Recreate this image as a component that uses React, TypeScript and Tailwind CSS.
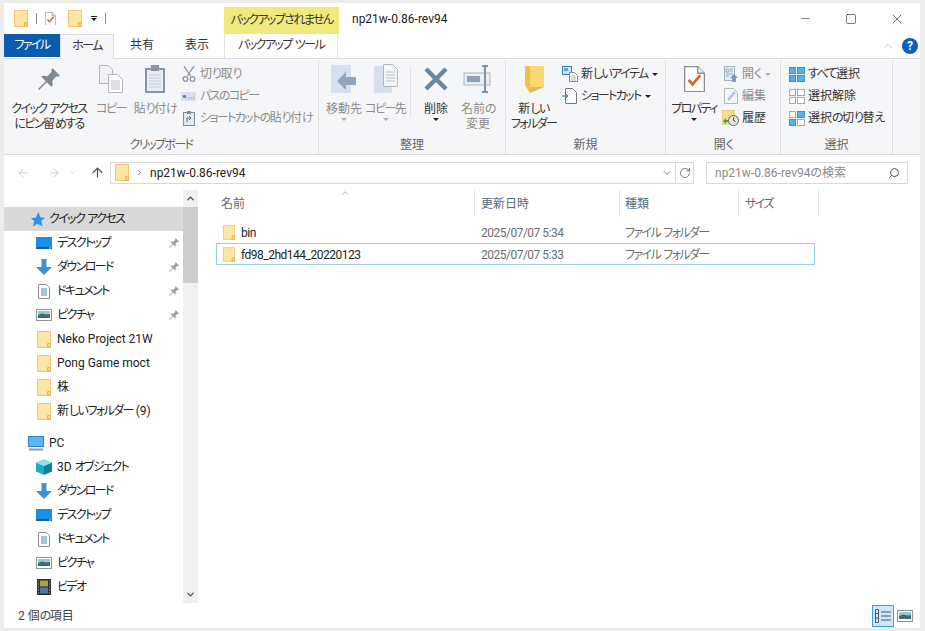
import { ReactNode } from "react"
import { ArrowLeft, ArrowRight, ArrowUp, ChevronDown, ChevronRight, ChevronUp, RotateCw, Search, X, Minus, Square } from "lucide-react"

// kana in the original UI font is much narrower than Noto's, so tighten just those runs
function T({ children }: { children: string }) {
  return (
    <>
      {children.split(/([\u3040-\u30ff]+)/).map((part, i) =>
        /[\u3040-\u30ff]/.test(part) ? <span key={i} className="tracking-[-1.6px]">{part}</span> : part
      )}
    </>
  )
}

function Folder({ w = 14, h = 17 }: { w?: number; h?: number }) {
  return (
    <svg width={w} height={h} viewBox="0 0 14 17" className="shrink-0">
      <path d="M.5.5h13v16H.5z" fill="#fde7a4" stroke="#eec56c" />
      <path d="M10.5 16.5v-4h3v4z" fill="#f6d27a" stroke="#e8b850" />
    </svg>
  )
}

function PropsIcon({ size = 17 }: { size?: number }) {
  return (
    <svg width={size} height={size * 1.25} viewBox="0 0 16 20" className="shrink-0">
      <path d="M.5.5h10l5 5v14H.5z" fill="#fff" stroke="#8a8f96" />
      <path d="M10.5.5v5h5" fill="#eef1f4" stroke="#8a8f96" />
      <path d="M3.5 10.5l3 3.5 6-7" fill="none" stroke="#d9622b" strokeWidth="2" />
    </svg>
  )
}

function Desktop() {
  return (
    <svg width="16" height="12" viewBox="0 0 16 12" className="shrink-0">
      <rect width="16" height="12" fill="#1b8fe8" />
      <rect y="10" width="16" height="2" fill="#0f5fa8" />
      <rect x="13" y="10.5" width="2" height="1" fill="#cfe6f8" />
    </svg>
  )
}

function Download() {
  return (
    <svg width="16" height="16" viewBox="0 0 16 16" className="shrink-0">
      <path d="M5.5 0h5v8H16l-8 8-8-8h5.5z" fill="#3f8fd8" />
    </svg>
  )
}

function Doc() {
  return (
    <svg width="12" height="15" viewBox="0 0 12 15" className="shrink-0">
      <path d="M.5.5h8l3 3v11H.5z" fill="#fff" stroke="#8a8f96" />
      <path d="M3 5h6M3 7h6M3 9h6M3 11h6" stroke="#3d8fc9" />
    </svg>
  )
}

function Picture({ w = 16, h = 12 }: { w?: number; h?: number }) {
  return (
    <svg width={w} height={h} viewBox="0 0 16 12" className="shrink-0">
      <rect x=".5" y=".5" width="15" height="11" fill="#fff" stroke="#8d9499" />
      <rect x="2" y="2" width="12" height="4" fill="#9ac6e4" />
      <path d="M2 6l4-1.500 4 1 4-.5v4H2z" fill="#3f6f62" />
    </svg>
  )
}

function Video() {
  return (
    <svg width="14" height="16" viewBox="0 0 14 16" className="shrink-0">
      <rect width="14" height="16" fill="#2b2b2b" />
      <rect x="3" y="1.500" width="8" height="6" fill="#b59a4a" />
      <rect x="3" y="8.500" width="8" height="6" fill="#4a78b0" />
      <path d="M1 2h1M1 5h1M1 8h1M1 11h1M1 14h1M12 2h1M12 5h1M12 8h1M12 11h1M12 14h1" stroke="#ddd" />
    </svg>
  )
}

function Cube() {
  return (
    <svg width="16" height="16" viewBox="0 0 16 16" className="shrink-0">
      <path d="M8 0l8 3.500-8 3.500-8-3.500z" fill="#8fe3ef" />
      <path d="M0 3.500l8 3.500v9l-8-3.500z" fill="#22a9c6" />
      <path d="M16 3.500l-8 3.500v9l8-3.500z" fill="#0f7f9f" />
    </svg>
  )
}

function Monitor() {
  return (
    <svg width="16" height="15" viewBox="0 0 16 15" className="shrink-0">
      <rect x=".5" y=".5" width="15" height="10" fill="#5cb8f2" stroke="#2c7fc0" />
      <path d="M1 13.500h14" stroke="#8a9aa8" strokeWidth="2" />
    </svg>
  )
}

function Music() {
  return (
    <svg width="12" height="16" viewBox="0 0 12 16" className="shrink-0">
      <path d="M5 0h2v16H5z" fill="#3a9fd8" />
    </svg>
  )
}

function Pin({ size = 10, color = "#9aa0a6" }: { size?: number; color?: string }) {
  return (
    <svg width={size} height={size} viewBox="0 0 20 20" className="shrink-0">
      <path d="M13 0l7 7-2 1-1-.500-4 4 .5 4-1.500 1.500-4-4-7 7-1-1 7-7-4-4L4.500 7l4 .5 4-4-.500-1z" fill={color} />
    </svg>
  )
}

function Grid4({ on }: { on: boolean[] }) {
  return (
    <div className="grid grid-cols-2 gap-px w-[16px] h-[15px] shrink-0">
      {on.map((v, i) => (
        <div key={i} className={v ? "bg-[#5ab0e6] border border-[#3f8fc4]" : "bg-white border border-[#a8a8a8]"} />
      ))}
    </div>
  )
}

function BigBtn({ icon, label, w, dim, caret }: { icon: ReactNode; label: ReactNode; w: number; dim?: boolean; caret?: boolean }) {
  return (
    <div className="flex flex-col items-center shrink-0" style={{ width: w }}>
      <div className="h-[38px] flex items-center justify-center">{icon}</div>
      <div className={`text-center leading-[15px] mt-[4px] whitespace-nowrap ${dim ? "text-[#8c8c8c]" : "text-[#333]"}`}>{label}</div>
      {caret && <div className={`w-0 h-0 border-x-[3px] border-x-transparent border-t-[3px] mt-[1px] ${dim ? "border-t-[#b0b0b0]" : "border-t-[#222]"}`} />}
    </div>
  )
}

function SmallBtn({ icon, label, dim, caret }: { icon: ReactNode; label: string; dim?: boolean; caret?: boolean }) {
  return (
    <div className={`h-[22px] flex items-center whitespace-nowrap ${dim ? "text-[#8c8c8c]" : "text-[#333]"}`}>
      <div className="w-[17px] flex justify-center shrink-0">{icon}</div>
      <span className="ml-[3px]"><T>{label}</T></span>
      {caret && <span className={`ml-1 w-0 h-0 border-x-[3px] border-x-transparent border-t-[3px] ${dim ? "border-t-[#b0b0b0]" : "border-t-[#222]"}`} />}
    </div>
  )
}

function Group({ w, label, children }: { w: number; label: string; children: ReactNode }) {
  return (
    <div className="flex flex-col shrink-0 border-r border-[#dfe1e3] mt-[1px]" style={{ width: w }}>
      <div className="h-[76px] flex">{children}</div>
      <div className="text-center text-[#666] h-[18px] leading-[18px]"><T>{label}</T></div>
    </div>
  )
}

function NavRow({ icon, label, pin }: { icon: ReactNode; label: string; pin?: boolean }) {
  return (
    <div className="h-[24px] flex items-center pl-[32px] pr-[4px] text-[#222] whitespace-nowrap">
      <div className="w-[16px] flex justify-center shrink-0">{icon}</div>
      <span className="ml-[5px] flex-1"><T>{label}</T></span>
      {pin && <Pin />}
    </div>
  )
}

function FileRow({ name, date, selected }: { name: string; date: string; selected?: boolean }) {
  return (
    <div className={`h-[22px] flex items-center border ${selected ? "border-[#99d1e8]" : "border-transparent"}`}>
      <div className="w-[264px] flex items-center pl-[6px] text-[#222] shrink-0">
        <Folder w={12} h={15} />
        <span className="ml-[6px] pt-[1px] tracking-[-0.5px]">{name}</span>
      </div>
      <div className="w-[144px] text-[#6d6d6d] shrink-0 pt-[1px] tracking-[-0.5px]">{date}</div>
      <div className="text-[#6d6d6d] pt-[1px]"><T>ファイル フォルダー</T></div>
    </div>
  )
}

export default function App() {
  return (
    <div className="w-[925px] h-[631px] bg-[#ececec] pl-[4px] pr-[5px] pt-[3px] pb-[3px] overflow-hidden text-[12px] [font-feature-settings:'palt'] font-['Roboto','Noto_Sans_CJK_JP',sans-serif]">
      <div className="w-[916px] h-[625px] bg-white flex flex-col">
        {/* title bar */}
        <div className="h-[31px] flex items-end shrink-0">
          <div className="w-[220px] h-full flex items-center pl-[10px] gap-[8px]">
            <Folder />
            <div className="w-px h-[11px] bg-[#888]" />
            <PropsIcon size={11} />
            <div className="ml-[4px]"><Folder /></div>
            <div className="flex flex-col items-center gap-[1px] ml-[1px]">
              <div className="w-[6px] h-px bg-[#222]" />
              <div className="w-0 h-0 border-x-[3px] border-x-transparent border-t-[3px] border-t-[#222]" />
            </div>
            <div className="w-px h-[11px] bg-[#888]" />
          </div>
          <div className="w-[115px] h-[27px] bg-[#eeea7c] text-[#333] text-center leading-[27px] whitespace-nowrap"><T>バックアップされません</T></div>
          <div className="ml-[13px] self-center text-[#222] whitespace-nowrap">np21w-0.86-rev94</div>
          <div className="ml-auto self-start flex items-center h-[31px] text-[#222]">
            <div className="w-[46px] flex justify-center"><Minus size={13} strokeWidth={1} /></div>
            <div className="w-[46px] flex justify-center"><Square size={12} strokeWidth={1.2} /></div>
            <div className="w-[46px] flex justify-center"><X size={16} strokeWidth={1} /></div>
          </div>
        </div>
        {/* tabs */}
        <div className="h-[25px] flex shrink-0 border-b border-[#dcdcdc] relative">
          <div className="w-[56px] h-[23px] bg-[#0b5cad] text-white text-center leading-[23px]"><T>ファイル</T></div>
          <div className="w-[54px] h-[25px] bg-[#f5f6f7] border-x border-t border-[#dcdcdc] text-[#333] text-center leading-[23px]"><T>ホーム</T></div>
          <div className="w-[56px] text-center leading-[23px] text-[#333]">共有</div>
          <div className="w-[54px] text-center leading-[23px] text-[#333]">表示</div>
          <div className="w-[114px] text-center leading-[23px] text-[#333] border-x border-[#e4e4e4] whitespace-nowrap"><T>バックアップ ツール</T></div>
          <div className="ml-auto flex items-center pr-[2px]">
            <ChevronUp size={14} strokeWidth={1.2} className="text-[#b4b4b4] mr-[7px]" />
            <div className="w-[16px] h-[16px] rounded-full bg-[#0c62b8] text-white text-center font-bold text-[12px] leading-[16px]">?</div>
          </div>
        </div>
        {/* ribbon */}
        <div className="h-[96px] bg-[#f5f6f7] border-b border-[#dcdcdc] flex shrink-0">
          <Group w={315} label="クリップボード">
            <BigBtn w={90} label={<><T>クイック アクセス</T><br /><T>にピン留めする</T></>} icon={<Pin size={22} color="#7f8a94" />} />
            <BigBtn w={34} dim label={<T>コピー</T>} icon={
              <svg width="24" height="28" viewBox="0 0 24 28"><path d="M.5.5h9l4 4v14H.5z" fill="#eef2f6" stroke="#aeb6bf" /><path d="M9.500 9.500h9l5 5v13h-14z" fill="#fff" stroke="#aeb6bf" /><path d="M12 16h9M12 18h9M12 20h9M12 22h9M12 24h9" stroke="#b7c4d2" /></svg>
            } />
            <BigBtn w={54} dim label={<T>貼り付け</T>} icon={
              <svg width="22" height="30" viewBox="0 0 22 30"><rect x="1" y="4" width="20" height="25" fill="#8796a6" /><rect x="3" y="6" width="16" height="21" fill="#e9edf3" /><rect x="7" y="1" width="8" height="6" fill="#8796a6" /><path d="M5 11h12M5 14h12M5 17h12M5 20h12M5 23h12" stroke="#c4ced9" /></svg>
            } />
            <div className="flex flex-col pt-[3px] -ml-[2px]">
              <SmallBtn dim label="切り取り" icon={
                <svg width="14" height="16" viewBox="0 0 14 16" fill="none" stroke="#8a95a1" strokeWidth="1.300"><path d="M2 0l6.500 10M12 0L5.500 10" /><circle cx="3.500" cy="13" r="2.300" /><circle cx="10.500" cy="13" r="2.300" /></svg>
              } />
              <SmallBtn dim label="パスのコピー" icon={
                <svg width="15" height="9" viewBox="0 0 15 9"><rect width="15" height="9" fill="#d6e2f0" /><path d="M2 3l1 3 1-3 1 3M7 6h1M9.500 6h1M12 6h1" stroke="#6c7a8a" fill="none" /></svg>
              } />
              <SmallBtn dim label="ショートカットの貼り付け" icon={
                <svg width="12" height="15" viewBox="0 0 12 15"><rect x=".5" y="1.500" width="11" height="13" fill="#e4e9ef" stroke="#7f8c9a" /><rect x="4" y="0" width="4" height="3" fill="#7f8c9a" /><path d="M4 11V7h4M6 5l2 2-2 2" stroke="#5a6b7c" fill="none" /></svg>
              } />
            </div>
          </Group>
          <Group w={187} label="整理">
            <div className="w-[4px]" />
            <BigBtn w={42} dim caret label={<T>移動先</T>} icon={
              <svg width="28" height="30" viewBox="0 0 28 30"><rect x="1" y="1" width="20" height="28" fill="#d5e1ef" /><path d="M26 13v8h-10v5L7 17l9-9v5z" fill="#8ea6c0" /></svg>
            } />
            <BigBtn w={42} dim caret label={<T>コピー先</T>} icon={
              <svg width="26" height="30" viewBox="0 0 26 30"><rect x="1" y="2" width="18" height="27" fill="#d5e1ef" /><path d="M10.500.5h9l5 5v17h-14z" fill="#f4f7fa" stroke="#aeb8c3" /><path d="M13 8h9M13 11h9M13 14h9M13 17h9" stroke="#b3c0cf" /></svg>
            } />
            <div className="w-px h-[52px] bg-[#dfe1e3] mt-[6px] mx-[3px]" />
            <BigBtn w={44} caret label="削除" icon={
              <svg width="26" height="26" viewBox="0 0 26 26"><path d="M3 3l20 20M23 3L3 23" stroke="#6e84a3" strokeWidth="4.500" /></svg>
            } />
            <BigBtn w={40} dim label={<><T>名前の</T><br />変更</>} icon={
              <svg width="30" height="28" viewBox="0 0 30 28"><rect x="1" y="8" width="26" height="12" fill="#e8eef5" stroke="#aab7c5" /><rect x="4" y="11" width="13" height="6" fill="#8ea2b8" /><path d="M19 1h6M22 1v26M19 27h6" stroke="#7d93ab" strokeWidth="2" /></svg>
            } />
          </Group>
          <Group w={160} label="新規">
            <BigBtn w={55} label={<><T>新しい</T><br /><T>フォルダー</T></>} icon={
              <svg width="20" height="28" viewBox="0 0 20 28"><path d="M6 1h14v21H6z" fill="#fcd873" /><path d="M1 1l5 0v27L1 20z" fill="#f2c048" /><path d="M6 28l14-6H6z" fill="#e8b94a" /></svg>
            } />
            <div className="flex flex-col pt-[3px]">
              <SmallBtn caret label="新しいアイテム" icon={
                <svg width="16" height="16" viewBox="0 0 16 16"><rect x=".5" y=".5" width="9" height="8" fill="#cfe3f5" stroke="#3a7ab0" /><rect x="2" y="2" width="4" height="3" fill="#5fa2d8" /><path d="M7.500 6.500h5l3 3v6h-8z" fill="#fff" stroke="#808890" /><path d="M9 10h5M9 12h5M9 14h5" stroke="#b3bac2" /></svg>
              } />
              <SmallBtn caret label="ショートカット" icon={
                <svg width="15" height="16" viewBox="0 0 15 16"><path d="M3.500.5h7l4 4v11h-11z" fill="#fff" stroke="#707880" /><path d="M0 8h6M4 6l2 2-2 2" stroke="#1f6fa8" fill="none" /></svg>
              } />
            </div>
          </Group>
          <Group w={115} label="開く">
            <BigBtn w={56} caret label={<T>プロパティ</T>} icon={<PropsIcon size={21} />} />
            <div className="flex flex-col pt-[3px]">
              <SmallBtn dim caret label="開く" icon={
                <svg width="14" height="16" viewBox="0 0 14 16"><rect x=".5" y=".5" width="10" height="14" fill="#e6edf5" stroke="#a4b2c2" /><path d="M2 3h3v3H2zM6 3h3M6 5h3M2 8h7M2 10h3" stroke="#9aabbd" fill="none" /><path d="M10 8l4 4h-2v4H8v-4H6z" fill="#7f9cba" /></svg>
              } />
              <SmallBtn dim label="編集" icon={
                <svg width="14" height="16" viewBox="0 0 14 16"><path d="M.5.5h9l4 4v11H.5z" fill="#f3f6fa" stroke="#a9bacb" /><path d="M4 12l7-8" stroke="#a9c7e4" strokeWidth="2.500" /></svg>
              } />
              <SmallBtn label="履歴" icon={
                <svg width="17" height="16" viewBox="0 0 17 16"><rect x="0" y="0" width="12" height="14" fill="#f4dd8c" stroke="#e0c060" /><circle cx="11.500" cy="10.500" r="5" fill="#e4e4e4" stroke="#666" /><path d="M11.500 7.500v3l2 1" stroke="#444" fill="none" /><path d="M1 11l3-3v2h3v2H4v2z" fill="#3ea33e" /></svg>
              } />
            </div>
          </Group>
          <Group w={112} label="選択">
            <div className="flex flex-col pt-[3px] pl-[7px]">
              <SmallBtn label="すべて選択" icon={<Grid4 on={[true, true, true, true]} />} />
              <SmallBtn label="選択解除" icon={<Grid4 on={[false, false, false, false]} />} />
              <SmallBtn label="選択の切り替え" icon={<Grid4 on={[false, true, true, false]} />} />
            </div>
          </Group>
        </div>
        {/* address bar */}
        <div className="h-[35px] flex items-center shrink-0">
          <div className="w-[106px] flex items-center pl-[12px] text-[#c4c4c4] shrink-0">
            <ArrowLeft size={14} strokeWidth={1.500} />
            <ArrowRight size={14} strokeWidth={1.500} className="ml-[17px]" />
            <ChevronDown size={9} strokeWidth={1.500} className="ml-[7px]" />
            <ArrowUp size={15} strokeWidth={2} className="ml-[13px] text-[#555]" />
          </div>
          <div className="w-[584px] h-[22px] border border-[#d9d9d9] flex items-center shrink-0">
            <div className="ml-[4px]"><Folder /></div>
            <ChevronRight size={9} strokeWidth={2} className="ml-[6px] text-[#555]" />
            <span className="ml-[6px] text-[#222]">np21w-0.86-rev94</span>
            <ChevronDown size={12} strokeWidth={1.500} className="ml-auto mr-[2px] text-[#555]" />
            <div className="w-[18px] h-full border-l border-[#d9d9d9] flex items-center justify-center">
              <RotateCw size={12} strokeWidth={1.500} className="text-[#555]" />
            </div>
          </div>
          <div className="ml-[12px] w-[202px] h-[22px] border border-[#d9d9d9] flex items-center pl-[8px] pr-[7px] text-[#8a8a8a] shrink-0">
            <span>np21w-0.86-rev94の検索</span>
            <Search size={12} strokeWidth={2} className="ml-auto text-[#555] -scale-x-100" />
          </div>
        </div>
        {/* main */}
        <div className="flex-1 flex min-h-0">
          <div className="w-[179px] overflow-hidden pt-[17px] shrink-0">
            <div className="h-[24px] bg-[#d9d9d9] flex items-center pl-[26px] text-[#222] whitespace-nowrap">
              <svg width="15" height="15" viewBox="0 0 16 16" className="shrink-0"><path d="M9 0l2 5.500 5 .5-4 3.500 1.500 6L8 12.500 3 15.500 4.500 9.500 1 6.500l5-.5z" fill="#2f8fe0" /></svg>
              <span className="ml-[4px]"><T>クイック アクセス</T></span>
            </div>
            <NavRow icon={<Desktop />} label="デスクトップ" pin />
            <NavRow icon={<Download />} label="ダウンロード" pin />
            <NavRow icon={<Doc />} label="ドキュメント" pin />
            <NavRow icon={<Picture />} label="ピクチャ" pin />
            <NavRow icon={<Folder />} label="Neko Project 21W" />
            <NavRow icon={<Folder />} label="Pong Game moct" />
            <NavRow icon={<Folder />} label="株" />
            <NavRow icon={<Folder />} label="新しいフォルダー (9)" />
            <div className="h-[24px] mt-[8px] flex items-center pl-[24px] text-[#222]">
              <Monitor />
              <span className="ml-[5px]">PC</span>
            </div>
            <NavRow icon={<Cube />} label="3D オブジェクト" />
            <NavRow icon={<Download />} label="ダウンロード" />
            <NavRow icon={<Desktop />} label="デスクトップ" />
            <NavRow icon={<Doc />} label="ドキュメント" />
            <NavRow icon={<Picture />} label="ピクチャ" />
            <NavRow icon={<Video />} label="ビデオ" />
            <NavRow icon={<Music />} label="" />
          </div>
          <div className="w-[15px] bg-[#f0f0f0] flex flex-col shrink-0">
            <div className="h-[17px] flex items-center justify-center"><ChevronUp size={11} strokeWidth={2.500} className="text-[#444]" /></div>
            <div className="h-[76px] bg-[#cdcdcd]" />
            <div className="mt-auto h-[17px] flex items-center justify-center"><ChevronDown size={11} strokeWidth={2.500} className="text-[#444]" /></div>
          </div>
          <div className="flex-1 pl-[18px] min-w-0">
            <div className="h-[27px] flex text-[#5a6a7a] relative">
              <ChevronUp size={10} strokeWidth={1.200} className="absolute left-[124px] top-[-2px] text-[#666]" />
              <div className="w-[259px] pl-[5px] leading-[29px] border-r border-[#e4e7ea]">名前</div>
              <div className="w-[145px] pl-[6px] leading-[29px] border-r border-[#e4e7ea]">更新日時</div>
              <div className="w-[119px] pl-[5px] leading-[29px] border-r border-[#e4e7ea]">種類</div>
              <div className="w-[80px] pl-[6px] leading-[29px] border-r border-[#e4e7ea]"><T>サイズ</T></div>
            </div>
            <div className="w-[599px] mt-[4px]">
              <FileRow name="bin" date="2025/07/07 5:34" />
              <FileRow name="fd98_2hd144_20220123" date="2025/07/07 5:33" selected />
            </div>
          </div>
        </div>
        {/* status bar */}
        <div className="h-[25px] flex items-center shrink-0 pl-[14px] pr-[7px] text-[#444]">
          <span><T>2 個の項目</T></span>
          <div className="ml-auto flex items-center">
            <div className="w-[22px] h-[22px] bg-[#cce8ff] border border-[#3f9bd0] flex items-center justify-center">
              <svg width="16" height="14" viewBox="0 0 16 14" fill="none" stroke="#555"><path d="M.5.5h3v13h-3zM.5 4.500h3M.5 9h3M6 3h10M6 7h10M6 11h10" /></svg>
            </div>
            <div className="ml-[3px]"><Picture /></div>
          </div>
        </div>
      </div>
    </div>
  )
}
